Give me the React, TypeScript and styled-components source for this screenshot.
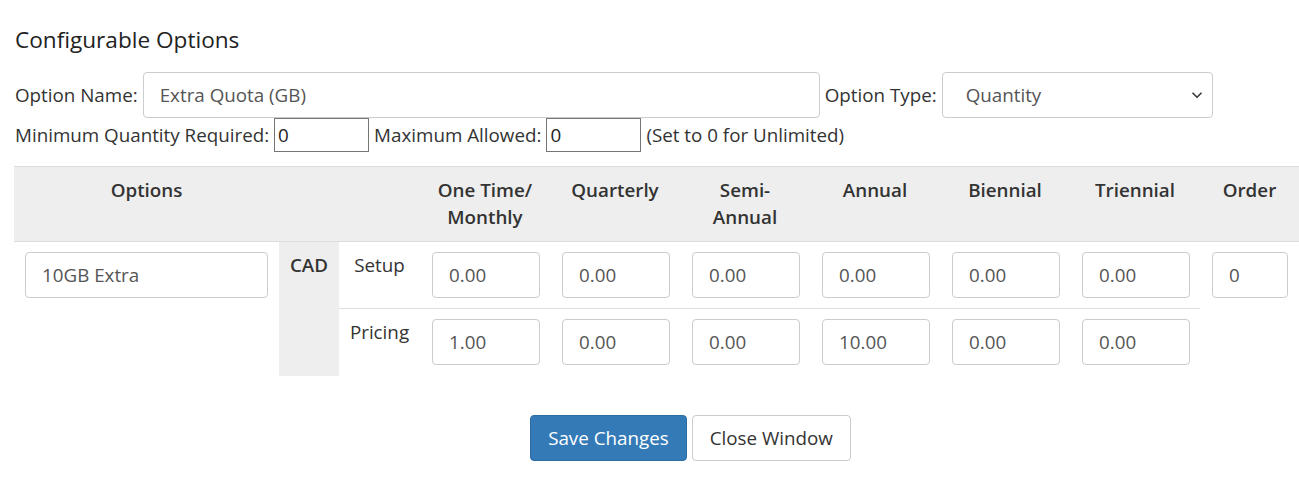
import React from "react";
import styled, { createGlobalStyle } from "styled-components";

const GlobalStyle = createGlobalStyle`
  html, body {
    margin: 0;
    padding: 0;
    background: #fff;
    overflow: hidden;
  }
  body {
    font-family: "Open Sans", "Liberation Sans", sans-serif;
    font-size: 18.8px;
    color: #333;
  }
`;

const Page = styled.div`
  box-sizing: border-box;
  width: 1299px;
  padding: 26px 0 0 14px;
`;

const Heading = styled.h2`
  margin: 0 0 18px 1px;
  font-size: 22.6px;
  font-weight: 400;
  line-height: 28px;
  color: #222;
`;

const FieldRow = styled.div<{ $h: number }>`
  display: flex;
  align-items: center;
  gap: 5px;
  padding-left: 1px;
  height: ${(p) => p.$h}px;
`;

const Label = styled.span`
  white-space: nowrap;
  line-height: 24px;
`;

const TextInput = styled.input<{ $w: number }>`
  box-sizing: border-box;
  width: ${(p) => p.$w}px;
  height: 46px;
  padding: 0 16px;
  border: 1px solid #ccc;
  border-radius: 4px;
  font: inherit;
  color: #555;
  background: #fff;
  outline: none;
`;

const SmallInput = styled.input`
  box-sizing: border-box;
  width: 95px;
  height: 34px;
  padding: 0 3px;
  border: 1px solid #767676;
  border-radius: 0;
  font: inherit;
  color: #222;
  background: #fff;
  outline: none;
`;

const SelectBox = styled.div`
  box-sizing: border-box;
  width: 271px;
  height: 46px;
  padding: 0 9px 0 23px;
  border: 1px solid #ccc;
  border-radius: 4px;
  display: flex;
  align-items: center;
  justify-content: space-between;
  color: #555;
`;

const Grid = styled.div`
  display: grid;
  grid-template-columns: 265px 60px 81px repeat(6, 130px) 99px;
  width: 1285px;
`;

const HeadCell = styled.div<{ $span?: number }>`
  grid-column: span ${(p) => p.$span ?? 1};
  background: #eee;
  border-top: 1px solid #ddd;
  border-bottom: 1px solid #ddd;
  padding: 10px 4px;
  text-align: center;
  font-weight: 600;
  line-height: 27px;
  color: #333;
`;

const Cell = styled.div<{ $rows?: number; $line?: boolean; $shade?: boolean }>`
  grid-row: span ${(p) => p.$rows ?? 1};
  padding: 10px 10px 10px 12px;
  background: ${(p) => (p.$shade ? "#eee" : "transparent")};
  border-bottom: 1px solid ${(p) => (p.$line ? "#ddd" : "transparent")};
  line-height: 27px;
`;

const SideCell = styled(Cell)`
  padding: 10px 11px;
`;

const CenterCell = styled(Cell)`
  padding: 10px 0;
  text-align: center;
`;

const Currency = styled(CenterCell)`
  font-weight: 600;
`;

const Buttons = styled.div`
  display: flex;
  justify-content: center;
  gap: 5px;
  margin-top: 39px;
  padding-left: 68px;
`;

const Button = styled.button<{ $primary?: boolean }>`
  height: 46px;
  padding: 0 17px;
  border-radius: 4px;
  font: inherit;
  cursor: pointer;
  border: 1px solid ${(p) => (p.$primary ? "#2e6da4" : "#ccc")};
  background: ${(p) => (p.$primary ? "#337ab7" : "#fff")};
  color: ${(p) => (p.$primary ? "#fff" : "#333")};
`;

const Chevron = () => (
  <svg width="12" height="8" viewBox="0 0 12 8">
    <path d="M1.5 1.8 L6 6.2 L10.5 1.8" fill="none" stroke="#333" strokeWidth="1.6" />
  </svg>
);

const setup = ["0.00", "0.00", "0.00", "0.00", "0.00", "0.00"];
const pricing = ["1.00", "0.00", "0.00", "10.00", "0.00", "0.00"];

export default function App() {
  return (
    <Page>
      <GlobalStyle />
      <Heading>Configurable Options</Heading>

      <FieldRow $h={46}>
        <Label>Option Name:</Label>
        <TextInput $w={677} defaultValue="Extra Quota (GB)" />
        <Label>Option Type:</Label>
        <SelectBox>
          <span>Quantity</span>
          <Chevron />
        </SelectBox>
      </FieldRow>

      <FieldRow $h={34} style={{ marginBottom: 14 }}>
        <Label>Minimum Quantity Required:</Label>
        <SmallInput defaultValue="0" />
        <Label>Maximum Allowed:</Label>
        <SmallInput defaultValue="0" />
        <Label>(Set to 0 for Unlimited)</Label>
      </FieldRow>

      <Grid>
        <HeadCell>Options</HeadCell>
        <HeadCell $span={2} />
        <HeadCell>
          One Time/
          <br />
          Monthly
        </HeadCell>
        <HeadCell>Quarterly</HeadCell>
        <HeadCell>
          Semi-
          <br />
          Annual
        </HeadCell>
        <HeadCell>Annual</HeadCell>
        <HeadCell>Biennial</HeadCell>
        <HeadCell>Triennial</HeadCell>
        <HeadCell>Order</HeadCell>

        <SideCell $rows={2}>
          <TextInput $w={243} defaultValue="10GB Extra" />
        </SideCell>
        <Currency $rows={2} $shade>
          CAD
        </Currency>
        <CenterCell $line>Setup</CenterCell>
        {setup.map((v, i) => (
          <Cell key={"s" + i} $line>
            <TextInput $w={108} defaultValue={v} />
          </Cell>
        ))}
        <Cell $rows={2}>
          <TextInput $w={76} defaultValue="0" />
        </Cell>

        <CenterCell>Pricing</CenterCell>
        {pricing.map((v, i) => (
          <Cell key={"p" + i}>
            <TextInput $w={108} defaultValue={v} />
          </Cell>
        ))}
      </Grid>

      <Buttons>
        <Button $primary>Save Changes</Button>
        <Button>Close Window</Button>
      </Buttons>
    </Page>
  );
}
